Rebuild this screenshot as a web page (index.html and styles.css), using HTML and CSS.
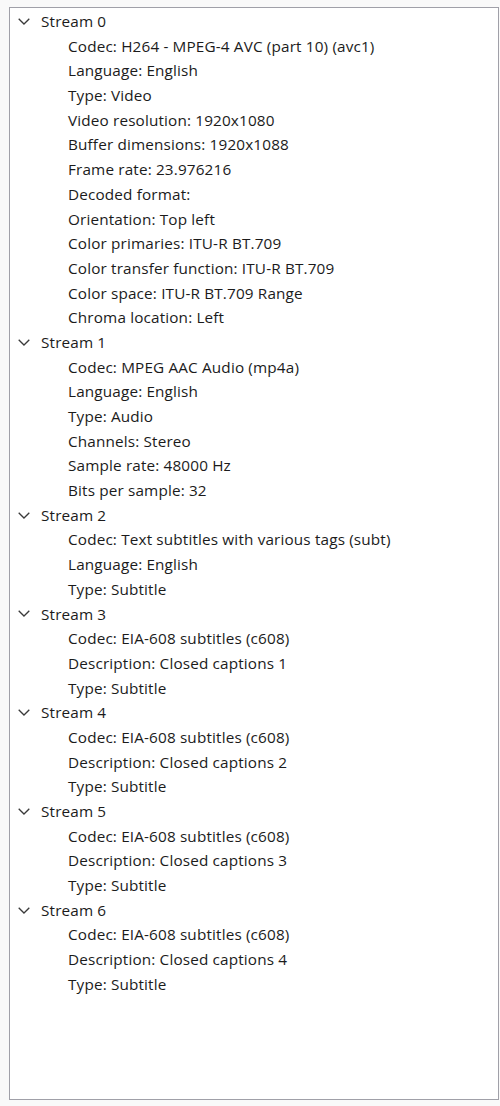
FILE: index.html
```html
<!DOCTYPE html>
<html>
<head>
<meta charset="utf-8">
<link rel="stylesheet" href="styles.css">
</head>
<body>
<div class="tree">
  <div class="node">
    <div class="head"><svg class="chev" viewBox="0 0 12 7"><path d="M0.7 0.7 L6 6 L11.3 0.7"/></svg><span>Stream 0</span></div>
    <div class="kids">
      <div class="leaf">Codec: H264 - MPEG-4 AVC (part 10) (avc1)</div>
      <div class="leaf">Language: English</div>
      <div class="leaf">Type: Video</div>
      <div class="leaf">Video resolution: 1920x1080</div>
      <div class="leaf">Buffer dimensions: 1920x1088</div>
      <div class="leaf">Frame rate: 23.976216</div>
      <div class="leaf">Decoded format:</div>
      <div class="leaf">Orientation: Top left</div>
      <div class="leaf">Color primaries: ITU-R BT.709</div>
      <div class="leaf">Color transfer function: ITU-R BT.709</div>
      <div class="leaf">Color space: ITU-R BT.709 Range</div>
      <div class="leaf">Chroma location: Left</div>
    </div>
  </div>
  <div class="node">
    <div class="head"><svg class="chev" viewBox="0 0 12 7"><path d="M0.7 0.7 L6 6 L11.3 0.7"/></svg><span>Stream 1</span></div>
    <div class="kids">
      <div class="leaf">Codec: MPEG AAC Audio (mp4a)</div>
      <div class="leaf">Language: English</div>
      <div class="leaf">Type: Audio</div>
      <div class="leaf">Channels: Stereo</div>
      <div class="leaf">Sample rate: 48000 Hz</div>
      <div class="leaf">Bits per sample: 32</div>
    </div>
  </div>
  <div class="node">
    <div class="head"><svg class="chev" viewBox="0 0 12 7"><path d="M0.7 0.7 L6 6 L11.3 0.7"/></svg><span>Stream 2</span></div>
    <div class="kids">
      <div class="leaf">Codec: Text subtitles with various tags (subt)</div>
      <div class="leaf">Language: English</div>
      <div class="leaf">Type: Subtitle</div>
    </div>
  </div>
  <div class="node">
    <div class="head"><svg class="chev" viewBox="0 0 12 7"><path d="M0.7 0.7 L6 6 L11.3 0.7"/></svg><span>Stream 3</span></div>
    <div class="kids">
      <div class="leaf">Codec: EIA-608 subtitles (c608)</div>
      <div class="leaf">Description: Closed captions 1</div>
      <div class="leaf">Type: Subtitle</div>
    </div>
  </div>
  <div class="node">
    <div class="head"><svg class="chev" viewBox="0 0 12 7"><path d="M0.7 0.7 L6 6 L11.3 0.7"/></svg><span>Stream 4</span></div>
    <div class="kids">
      <div class="leaf">Codec: EIA-608 subtitles (c608)</div>
      <div class="leaf">Description: Closed captions 2</div>
      <div class="leaf">Type: Subtitle</div>
    </div>
  </div>
  <div class="node">
    <div class="head"><svg class="chev" viewBox="0 0 12 7"><path d="M0.7 0.7 L6 6 L11.3 0.7"/></svg><span>Stream 5</span></div>
    <div class="kids">
      <div class="leaf">Codec: EIA-608 subtitles (c608)</div>
      <div class="leaf">Description: Closed captions 3</div>
      <div class="leaf">Type: Subtitle</div>
    </div>
  </div>
  <div class="node">
    <div class="head"><svg class="chev" viewBox="0 0 12 7"><path d="M0.7 0.7 L6 6 L11.3 0.7"/></svg><span>Stream 6</span></div>
    <div class="kids">
      <div class="leaf">Codec: EIA-608 subtitles (c608)</div>
      <div class="leaf">Description: Closed captions 4</div>
      <div class="leaf">Type: Subtitle</div>
    </div>
  </div>
</div>
</body>
</html>
```

FILE: styles.css
```css
html, body {
  margin: 0;
  padding: 0;
  background: #f9f9f9;
}
body {
  padding: 7px 1px 6px 9px;
  font-family: "Open Sans", "Noto Sans", sans-serif;
  font-size: 15.3px;
  letter-spacing: 0.15px;
  color: #1b1b1b;
}
.tree {
  box-sizing: border-box;
  width: 490px;
  height: 1093px;
  background: #ffffff;
  border: 1px solid #a0a0a8;
  padding: 1px 0 0 0;
}
.head, .leaf {
  height: 24.69px;
  line-height: 24.69px;
  white-space: nowrap;
}
.head {
  display: flex;
  align-items: center;
}
.chev {
  width: 12px;
  height: 7px;
  margin-left: 8px;
  margin-right: 11px;
  fill: none;
  stroke: #3a3a3a;
  stroke-width: 1.3;
}
.leaf {
  padding-left: 58px;
}
```
